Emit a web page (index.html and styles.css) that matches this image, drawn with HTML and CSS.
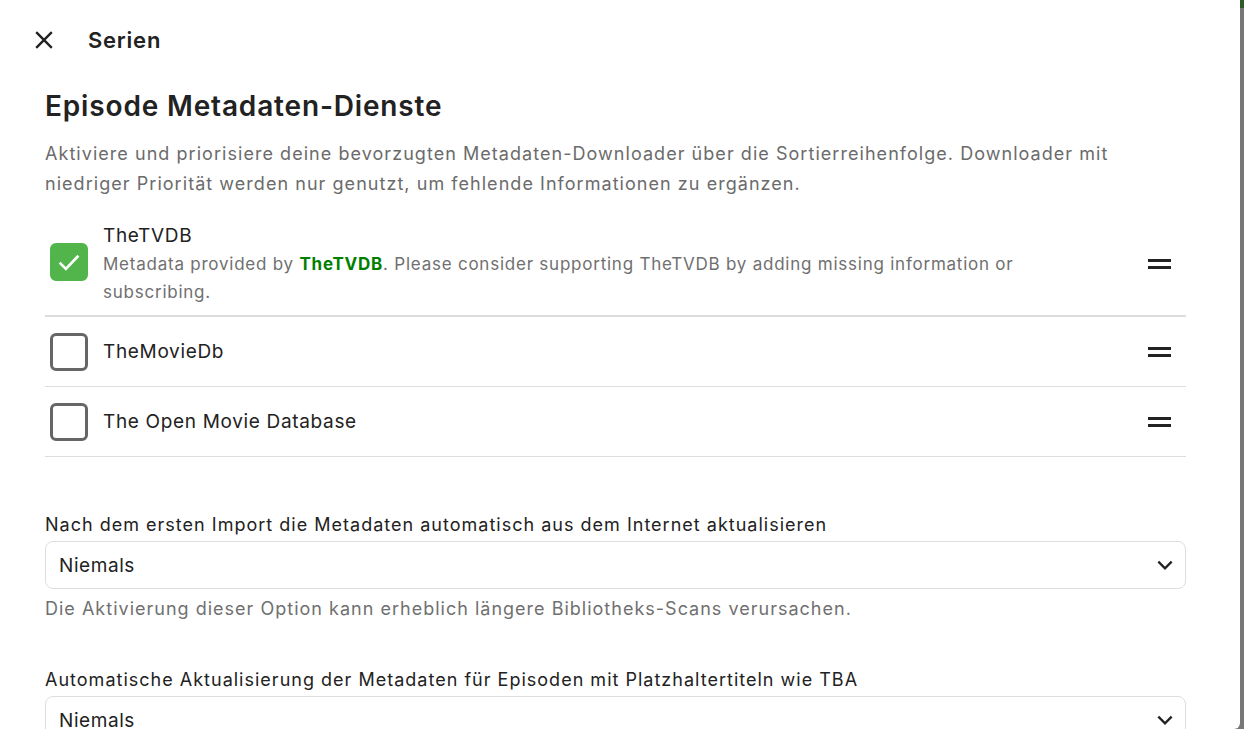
FILE: index.html
```html
<!DOCTYPE html>
<html lang="de">
<head>
    <meta charset="UTF-8">
    <title>Serien</title>
    <link rel="stylesheet" href="styles.css">
</head>
<body>
    <div class="dialog">
        <div class="dialog-header">
            <button class="btn-close" title="Schließen">
                <svg width="22" height="22" viewBox="0 0 24 24"><path d="M3.5 3.5L20.5 20.5M20.5 3.5L3.5 20.5" stroke="#222" stroke-width="2.6" fill="none"/></svg>
            </button>
            <h2 class="dialog-title">Serien</h2>
        </div>

        <div class="dialog-content">
            <h3 class="section-title">Episode Metadaten-Dienste</h3>
            <p class="section-desc">Aktiviere und priorisiere deine bevorzugten Metadaten-Downloader über die Sortierreihenfolge. Downloader mit niedriger Priorität werden nur genutzt, um fehlende Informationen zu ergänzen.</p>

            <div class="sort-list">
                <div class="sort-item">
                    <span class="check checked">
                        <svg width="30" height="30" viewBox="0 0 24 24"><path d="M4.5 12.5L9.5 17.5L19.5 7" stroke="#fff" stroke-width="2.1" fill="none"/></svg>
                    </span>
                    <div class="item-text">
                        <div class="item-name">TheTVDB</div>
                        <div class="item-info">Metadata provided by <a href="#" class="link">TheTVDB</a>. Please consider supporting TheTVDB by adding missing information or subscribing.</div>
                    </div>
                    <span class="handle"></span>
                </div>
                <div class="sort-item">
                    <span class="check"></span>
                    <div class="item-text">
                        <div class="item-name">TheMovieDb</div>
                    </div>
                    <span class="handle"></span>
                </div>
                <div class="sort-item">
                    <span class="check"></span>
                    <div class="item-text">
                        <div class="item-name">The Open Movie Database</div>
                    </div>
                    <span class="handle"></span>
                </div>
            </div>

            <div class="field">
                <label class="field-label">Nach dem ersten Import die Metadaten automatisch aus dem Internet aktualisieren</label>
                <div class="select">
                    <span>Niemals</span>
                    <svg width="20" height="20" viewBox="0 0 24 24"><path d="M4 8L12 16L20 8" stroke="#222" stroke-width="2.8" fill="none"/></svg>
                </div>
                <div class="field-help">Die Aktivierung dieser Option kann erheblich längere Bibliotheks-Scans verursachen.</div>
            </div>

            <div class="field">
                <label class="field-label">Automatische Aktualisierung der Metadaten für Episoden mit Platzhaltertiteln wie TBA</label>
                <div class="select">
                    <span>Niemals</span>
                    <svg width="20" height="20" viewBox="0 0 24 24"><path d="M4 8L12 16L20 8" stroke="#222" stroke-width="2.8" fill="none"/></svg>
                </div>
            </div>
        </div>
    </div>
</body>
</html>
```

FILE: styles.css
```css
html, body {
    margin: 0;
    height: 100%;
    overflow: hidden;
}

body {
    font-family: Inter, "Noto Sans", sans-serif;
    background: linear-gradient(#2f5a2a 0, #2f5a2a 8px, #777 8px);
    color: #222;
    letter-spacing: 0.05em;
}

.dialog {
    width: 1240px;
    height: 729px;
    background: #fff;
    border-bottom-right-radius: 6px;
    overflow: hidden;
}

.dialog-header {
    display: flex;
    align-items: center;
    height: 80px;
    padding-left: 33px;
}

.btn-close {
    background: none;
    border: none;
    padding: 0;
    width: 22px;
    height: 22px;
    display: flex;
    cursor: pointer;
}

.dialog-title {
    margin: 0 0 0 33px;
    font-size: 22px;
    font-weight: 600;
    letter-spacing: 0.035em;
}

.dialog-content {
    padding: 7px 54px 0 45px;
}

.section-title {
    margin: 0;
    font-size: 28px;
    font-weight: 600;
    line-height: 38px;
    letter-spacing: 0.03em;
}

.section-desc {
    margin: 14px 0 23px;
    font-size: 18px;
    line-height: 30px;
    color: #6b6b6b;
    letter-spacing: 0.058em;
}

.sort-list {
    margin-bottom: 56px;
}

.sort-item {
    display: flex;
    align-items: center;
    border-bottom: 1px solid #ddd;
    min-height: 69px;
}

.sort-item:first-child {
    border-bottom-width: 2px;
    padding-bottom: 9px;
    align-items: flex-start;
}

.sort-item:first-child .check {
    margin-top: 21px;
}

.check {
    flex: none;
    box-sizing: border-box;
    width: 38px;
    height: 38px;
    margin: 0 15px 0 5px;
    border: 3px solid #666;
    border-radius: 6px;
    display: flex;
    align-items: center;
    justify-content: center;
}

.check.checked {
    background: #52b54b;
    border-color: #52b54b;
}

.item-text {
    flex: 1;
    padding-right: 120px;
}

.item-name {
    font-size: 19px;
    line-height: 28px;
    letter-spacing: 0.035em;
}

.item-info {
    font-size: 17px;
    line-height: 28px;
    color: #707070;
    letter-spacing: 0.045em;
}

.link {
    color: #008000;
    font-weight: 700;
    text-decoration: none;
}

.handle {
    flex: none;
    width: 23px;
    height: 10px;
    margin-right: 15px;
    border-top: 3px solid #222;
    border-bottom: 3px solid #222;
    box-sizing: border-box;
    align-self: center;
}

.field {
    margin-bottom: 47px;
}

.field-label {
    display: block;
    font-size: 18px;
    line-height: 24px;
    margin-bottom: 4px;
    letter-spacing: 0.056em;
}

.select {
    display: flex;
    align-items: center;
    justify-content: space-between;
    box-sizing: border-box;
    height: 48px;
    padding: 0 10px 0 13px;
    border: 1px solid #ddd;
    border-radius: 8px;
    font-size: 19px;
    letter-spacing: 0.03em;
}

.field-help {
    margin-top: 8px;
    font-size: 18px;
    line-height: 24px;
    color: #707070;
    letter-spacing: 0.056em;
}
```
